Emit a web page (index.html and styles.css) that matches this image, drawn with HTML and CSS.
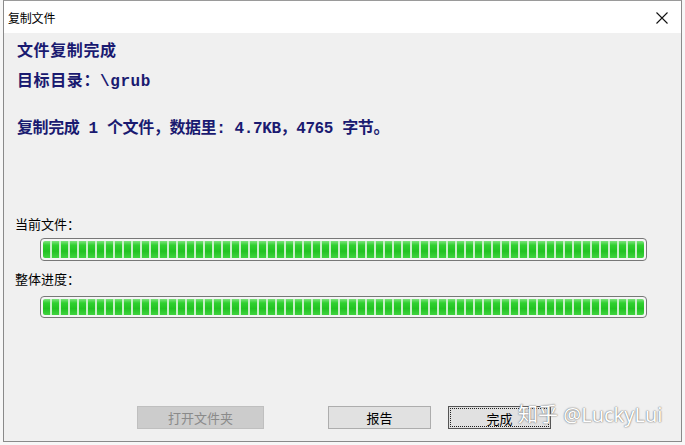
FILE: index.html
```html
<!DOCTYPE html>
<html lang="zh-CN">
<head>
  <meta charset="UTF-8" />
  <title>复制文件</title>
  <link rel="stylesheet" href="styles.css">
</head>
<body>
  <div class="window" role="dialog" aria-label="复制文件">
    <div class="titlebar">
      <span class="title">复制文件</span>
      <svg class="close" viewBox="0 0 12 12" aria-hidden="true">
        <path d="M0.5 0.5L11.5 11.5M11.5 0.5L0.5 11.5" stroke="#111" stroke-width="1.1" fill="none"/>
      </svg>
    </div>
    <div class="content">
      <div class="heading">文件复制完成</div>
      <div class="info">目标目录：\grub</div>
      <div class="info summary">复制完成 1 个文件，数据里: 4.7KB，4765 字节。</div>

      <div class="label first">当前文件：</div>
      <div class="bar"><div class="fill"></div></div>
      <div class="label">整体进度：</div>
      <div class="bar second"><div class="fill"></div></div>

      <div class="buttons">
        <button type="button" class="btn wide" disabled>打开文件夹</button>
        <button type="button" class="btn report">报告</button>
        <button type="button" class="btn focused"><span>完成</span></button>
      </div>
    </div>
    <div class="watermark">知乎 @LuckyLui</div>
  </div>
</body>
</html>
```

FILE: styles.css
```css
:root {
  --face: #f0f0f0;
  --navy: #1a1a70;
  --cjk: "Noto Sans CJK SC", "Microsoft YaHei", sans-serif;
}

* {
  box-sizing: border-box;
}

body {
  margin: 0;
  background: #f7f7f7;
  font-family: var(--cjk);
  width: 685px;
  height: 445px;
  overflow: hidden;
}

.window {
  position: relative;
  margin-left: 3px;
  width: 679px;
  height: 442px;
  border: 1px solid #8a8a8a;
  border-top-color: #9a9a9a;
  background: var(--face);
  display: flex;
  flex-direction: column;
}

.titlebar {
  height: 32px;
  background: #ffffff;
  display: flex;
  align-items: center;
  justify-content: space-between;
  padding: 0 13px 0 4px;
  flex-shrink: 0;
}

.title {
  font-size: 12px;
  color: #000;
  letter-spacing: -0.2px;
}

.close {
  width: 12px;
  height: 12px;
  margin-top: 2px;
}

.content {
  padding: 9px 0 0 11px;
  display: flex;
  flex-direction: column;
}

.heading,
.info {
  font-family: "Liberation Mono", var(--cjk);
  font-weight: 700;
  font-size: 16px;
  line-height: 20px;
  color: var(--navy);
  margin-left: 2px;
  letter-spacing: 0.6px;
}

.info {
  margin-top: 10px;
}

.summary {
  margin-top: 27px;
  letter-spacing: -0.4px;
}

.label {
  font-size: 13px;
  line-height: 16px;
  color: #000;
  margin-top: 10px;
}

.label.first {
  margin-top: 77px;
}

.bar {
  margin: 6px 0 0 25px;
  width: 607px;
  height: 23px;
  border: 1px solid #777;
  border-radius: 4px;
  background: #f6f6f6;
  padding: 2px;
}

.bar.second {
  margin-top: 9px;
  height: 22px;
}

.fill {
  height: 100%;
  border-radius: 2px;
  background:
    repeating-linear-gradient(to right, transparent 0 7px, #c8efc8 7px 9px),
    linear-gradient(to bottom, #7ee37e 0%, #2fd02f 25%, #22c322 60%, #40d440 100%);
}

.buttons {
  display: flex;
  align-items: center;
  margin-top: 88px;
  padding-left: 122px;
}

.btn {
  font-family: var(--cjk);
  font-size: 13px;
  height: 23px;
  padding: 0;
  border: 1px solid #adadad;
  background: #e1e1e1;
  color: #000;
}

.btn.wide {
  width: 127px;
  background: #cccccc;
  border-color: #bfbfbf;
  color: #8a8a8a;
}

.btn.report {
  width: 103px;
  margin-left: 64px;
}

.btn.focused {
  width: 103px;
  margin-left: 17px;
  border-color: #555;
  padding: 1px;
}

.btn.focused span {
  display: block;
  height: 100%;
  border: 1px dotted #222;
  line-height: 19px;
}

.watermark {
  position: absolute;
  left: 514px;
  top: 400px;
  white-space: nowrap;
  font-family: "Noto Sans", var(--cjk);
  font-size: 20px;
  line-height: 27px;
  color: #ffffff;
  text-shadow: 0 0 1px #666, 0 0 2px #888;
}
```
